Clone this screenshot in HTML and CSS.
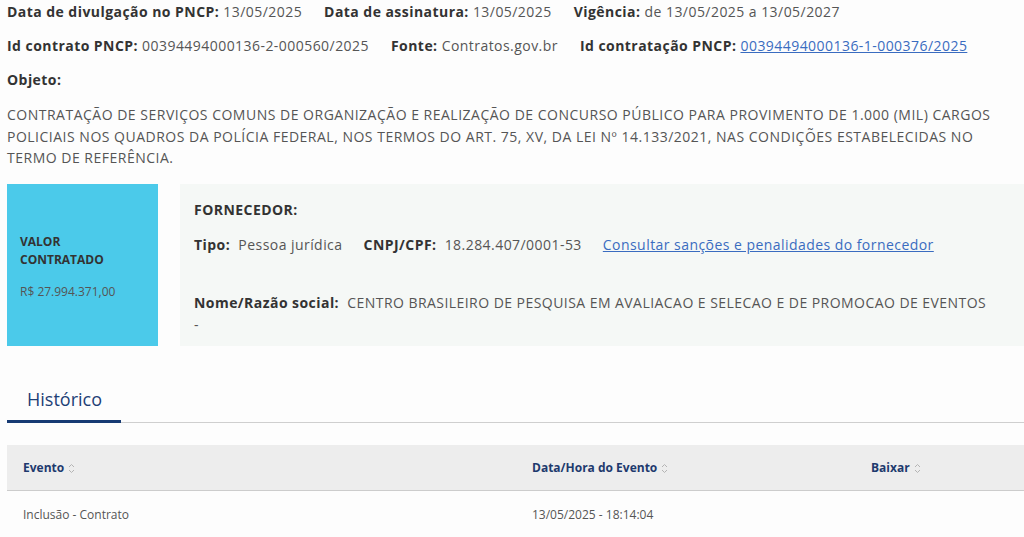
FILE: index.html
```html
<!DOCTYPE html>
<html lang="pt-BR">
<head>
<meta charset="utf-8">
<link rel="stylesheet" href="styles.css">
</head>
<body>
<div class="page">
  <div class="meta-row">
    <span class="item"><b>Data de divulgação no PNCP:</b> 13/05/2025</span>
    <span class="item"><b>Data de assinatura:</b> 13/05/2025</span>
    <span class="item"><b>Vigência:</b> de 13/05/2025 a 13/05/2027</span>
  </div>
  <div class="meta-row">
    <span class="item"><b>Id contrato PNCP:</b> 00394494000136-2-000560/2025</span>
    <span class="item"><b>Fonte:</b> Contratos.gov.br</span>
    <span class="item"><b>Id contratação PNCP:</b> <a href="#">00394494000136-1-000376/2025</a></span>
  </div>
  <div class="meta-row"><b>Objeto:</b></div>
  <p class="objeto">CONTRATAÇÃO DE SERVIÇOS COMUNS DE ORGANIZAÇÃO E REALIZAÇÃO DE CONCURSO PÚBLICO PARA PROVIMENTO DE 1.000 (MIL) CARGOS POLICIAIS NOS QUADROS DA POLÍCIA FEDERAL, NOS TERMOS DO ART. 75, XV, DA LEI Nº 14.133/2021, NAS CONDIÇÕES ESTABELECIDAS NO TERMO DE REFERÊNCIA.</p>

  <div class="cards">
    <div class="valor">
      <div class="valor-title">VALOR<br>CONTRATADO</div>
      <div class="valor-num">R$ 27.994.371,00</div>
    </div>
    <div class="fornecedor">
      <div class="f-title">FORNECEDOR:</div>
      <div class="f-row">
        <span class="f-item"><b>Tipo:</b>&nbsp; Pessoa jurídica</span>
        <span class="f-item"><b>CNPJ/CPF:</b>&nbsp; 18.284.407/0001-53</span>
        <a href="#" class="f-item">Consultar sanções e penalidades do fornecedor</a>
      </div>
      <div class="f-name"><b>Nome/Razão social:</b>&nbsp; CENTRO BRASILEIRO DE PESQUISA EM AVALIACAO E SELECAO E DE PROMOCAO DE EVENTOS<br>-</div>
    </div>
  </div>

  <div class="tabs">
    <div class="tab active">Histórico</div>
  </div>

  <table class="hist">
    <thead>
      <tr>
        <th class="c1">Evento <span class="sort"><svg width="7" height="11" viewBox="0 0 7 11"><path d="M1 4 L3.5 1.5 L6 4" fill="none" stroke="#b4b4b4" stroke-width="1"/><path d="M1 7 L3.5 9.5 L6 7" fill="none" stroke="#b4b4b4" stroke-width="1"/></svg></span></th>
        <th class="c2">Data/Hora do Evento <span class="sort"><svg width="7" height="11" viewBox="0 0 7 11"><path d="M1 4 L3.5 1.5 L6 4" fill="none" stroke="#b4b4b4" stroke-width="1"/><path d="M1 7 L3.5 9.5 L6 7" fill="none" stroke="#b4b4b4" stroke-width="1"/></svg></span></th>
        <th class="c3">Baixar <span class="sort"><svg width="7" height="11" viewBox="0 0 7 11"><path d="M1 4 L3.5 1.5 L6 4" fill="none" stroke="#b4b4b4" stroke-width="1"/><path d="M1 7 L3.5 9.5 L6 7" fill="none" stroke="#b4b4b4" stroke-width="1"/></svg></span></th>
      </tr>
    </thead>
    <tbody>
      <tr>
        <td>Inclusão - Contrato</td>
        <td>13/05/2025 - 18:14:04</td>
        <td></td>
      </tr>
    </tbody>
  </table>
</div>
</body>
</html>
```

FILE: styles.css
```css
html, body {
  margin: 0;
  padding: 0;
  background: #fdfdfd;
}
body {
  font-family: "Open Sans", "Liberation Sans", sans-serif;
  color: #555555;
  font-size: 14px;
}
b { color: #333333; font-weight: 700; }
a { color: #3a6cc0; text-decoration: underline; }

.page {
  padding: 0 0 0 7px;
  overflow: hidden;
}

.meta-row {
  display: flex;
  gap: 22px;
  height: 34px;
  line-height: 24px;
  white-space: nowrap;
  letter-spacing: 0.45px;
}

.objeto {
  margin: 0;
  padding-top: 2px;
  line-height: 21.5px;
  max-width: 1005px;
  letter-spacing: 0.5px;
}

.cards {
  display: flex;
  gap: 22px;
  margin-top: 15px;
  height: 162px;
}
.valor {
  width: 138px;
  background: #4bcaea;
  padding: 16px 0 0 13px;
  display: flex;
  flex-direction: column;
  justify-content: center;
  font-size: 12px;
}
.valor-title {
  font-weight: 700;
  color: #333333;
  line-height: 18px;
}
.valor-num {
  margin-top: 14px;
  color: #555555;
  margin-bottom: 12px;
}
.fornecedor {
  flex: 1;
  background: #f5f8f6;
  padding: 16px 20px 0 14px;
  letter-spacing: 0.45px;
}
.f-title {
  font-weight: 700;
  color: #333333;
  line-height: 20px;
}
.f-row {
  display: flex;
  gap: 21px;
  margin-top: 15px;
  line-height: 20px;
  white-space: nowrap;
}
.f-name {
  margin-top: 37px;
  line-height: 22px;
}

.tabs {
  margin-top: 38px;
  border-bottom: 1px solid #cfcfcf;
  display: flex;
}
.tab {
  font-size: 18px;
  color: #1e3f76;
  padding: 0 20px 0 20px;
  line-height: 30px;
  height: 36px;
  border-bottom: 3px solid #173a73;
  margin-bottom: -1px;
  width: 74px;
}

.hist {
  margin-top: 22px;
  width: 1030px;
  border-collapse: collapse;
  font-size: 12px;
}
.hist th {
  background: #ededed;
  height: 45px;
  text-align: left;
  color: #1e3a6e;
  font-weight: 700;
  padding: 0 0 0 16px;
  border-bottom: 1px solid #cccccc;
}
.hist th.c1 { width: 493px; }
.hist th.c2 { width: 323px; }
.sort { display: inline-block; vertical-align: middle; margin-left: 1px; }
.sort svg { display: block; }
.hist td {
  height: 44px;
  padding: 2px 0 0 16px;
  color: #555555;
  background: #fdfdfd;
}
```
